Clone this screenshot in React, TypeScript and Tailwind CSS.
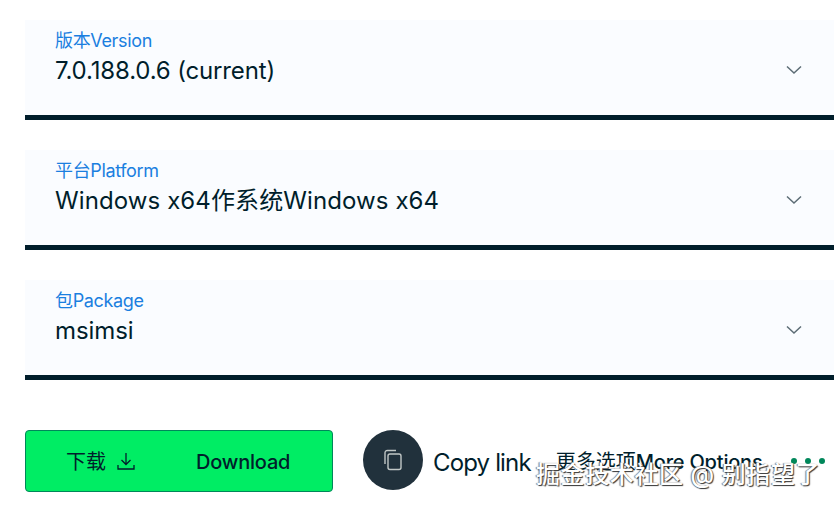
import React from "react";

const font = { fontFamily: '"Inter", "Noto Sans CJK SC", sans-serif' };

function Field({ label, value, track }: { label: string; value: string; track: string }) {
  return (
    <div className="ml-[25px] mr-[4px] h-[100px] bg-[#fafcff] border-b-[5px] border-[#001e2b] pl-[30px] pr-[32px] flex justify-between">
      <div className="flex flex-col pt-[10px]">
        <div className="text-[18px] leading-[22px] text-[#1a7fe0] tracking-[-0.35px]">{label}</div>
        <div className={`text-[24px] leading-[36px] pt-[1px] text-[#001e2b] whitespace-nowrap ${track}`}>{value}</div>
      </div>
      <svg className="mt-[45px]" width="16" height="10" viewBox="0 0 16 10" fill="none" stroke="#5c6c75" strokeWidth="1.5">
        <path d="M1 1.5 L8 8 L15 1.5" />
      </svg>
    </div>
  );
}

export default function App() {
  return (
    <div className="relative w-[838px] h-[506px] bg-white overflow-hidden" style={font}>
      <div className="pt-[20px] flex flex-col gap-[30px]">
        <Field label="版本Version" value="7.0.188.0.6 (current)" track="tracking-[-0.15px]" />
        <Field label="平台Platform" value="Windows x64作系统Windows x64" track="tracking-[0.1px]" />
        <Field label="包Package" value="msimsi" track="tracking-[-0.1px]" />
      </div>
      <div className="mt-[50px] ml-[25px] flex items-start">
        <div className="w-[308px] h-[62px] rounded-[4px] bg-[#00ed64] border border-[#00875a] flex items-center pl-[40px] text-[#001e2b]">
          <span className="text-[20px] pt-[2px]">下载</span>
          <svg className="ml-[10px]" width="20" height="20" viewBox="0 0 20 20" fill="none" stroke="#001e2b" strokeWidth="1.3">
            <path d="M10 2 V13 M5.5 9 L10 13.5 L14.5 9 M2 14 V18 H18 V14" />
          </svg>
          <span className="ml-[60px] pt-[2px] text-[20px] font-medium tracking-[-0.2px]">Download</span>
        </div>
        <div className="ml-[30px] w-[60px] h-[60px] rounded-full bg-[#21313c] flex items-center justify-center">
          <svg width="20" height="22" viewBox="0 0 20 22" fill="none" stroke="#c1c7c6" strokeWidth="1.4">
            <rect x="5" y="5" width="13" height="15.5" rx="2" />
            <path d="M2 15 V4 Q2 1.5 4.5 1.5 H13" />
          </svg>
        </div>
        <div className="ml-[10px] h-[62px] pt-[3px] flex items-center text-[24px] text-[#001e2b] tracking-[-0.85px] whitespace-nowrap">Copy link</div>
        <div className="ml-[25px] h-[62px] pt-[1px] flex items-center text-[20px] text-[#001e2b] tracking-[-0.2px] font-medium whitespace-nowrap">
          <span className="font-normal tracking-[0px]">更多选项</span>More Options
        </div>
        <div className="ml-[28px] h-[62px] flex items-center gap-[8px]">
          <span className="w-[6px] h-[6px] rounded-full bg-[#00875a]" />
          <span className="w-[6px] h-[6px] rounded-full bg-[#00875a]" />
          <span className="w-[6px] h-[6px] rounded-full bg-[#00875a]" />
        </div>
      </div>
      <div className="absolute left-[536px] top-[459px] text-[24px] leading-[32px] font-medium tracking-[0.6px] text-white whitespace-nowrap [text-shadow:1px_1px_1px_#333,-1px_0_1px_#777]">
        掘金技术社区 @ 别指望了
      </div>
    </div>
  );
}
